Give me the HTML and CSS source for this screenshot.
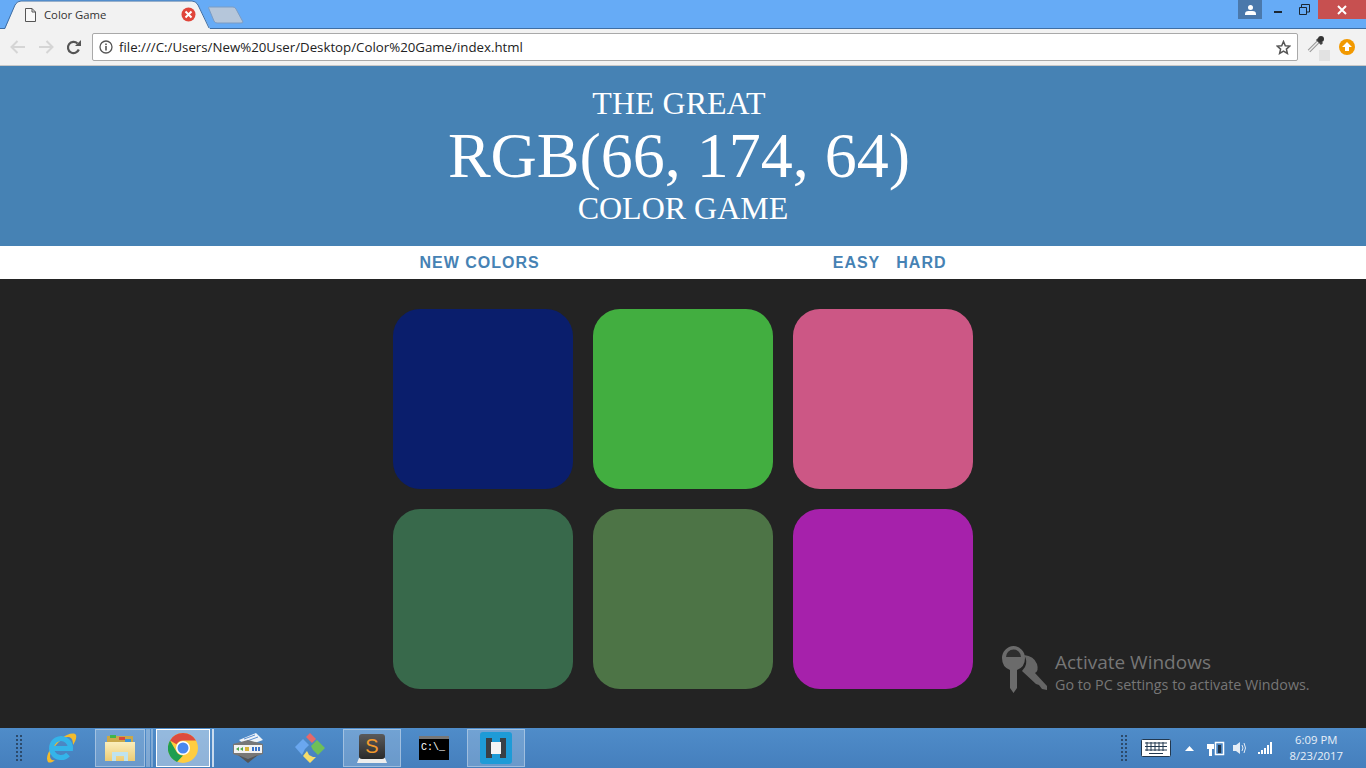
FILE: index.html
```html
<!DOCTYPE html>
<html lang="en">
<head>
<meta charset="utf-8">
<title>Color Game</title>
<link rel="stylesheet" href="styles.css">
</head>
<body>
<div class="window">
  <div class="tabstrip">
    <div class="tab">
      <svg class="tab-shape" width="210" height="29" viewBox="0 0 210 29"><path d="M5 29 L15 5 Q17 1 21 1 L192 1 Q196 1 198 5 L210 29 Z" fill="#f2f2f2"/><path d="M5 28 L15 5 Q17 1 21 1 L192 1 Q196 1 198 5 L209 28" fill="none" stroke="#3f6ea3" stroke-width="1"/></svg>
      <svg class="tab-file" width="11" height="14" viewBox="0 0 11 14"><path d="M.5 .5H7L10.500 4V13.500H.5V.5Z M7 .5V4H10.500" fill="#f8f8f8" stroke="#555"/></svg>
      <span class="tab-title">Color Game</span>
      <svg class="tab-close" width="15" height="15" viewBox="0 0 15 15"><circle cx="7.500" cy="7.500" r="7" fill="#e0453a"/><path d="M4.500 4.500L10.500 10.500M10.500 4.500L4.500 10.500" stroke="#fff" stroke-width="2"/></svg>
    </div>
    <svg class="new-tab" width="36" height="18" viewBox="0 0 36 18"><path d="M1 1H25Q27 1 28 3L35 16Q35 17 33 17H9Q7 17 6 15L1 3Q0 1 1 1Z" fill="#b5c6da" stroke="#7b9cc4"/></svg>
    <div class="win-controls">
      <div class="avatar"><svg width="11" height="10" viewBox="0 0 11 10"><circle cx="5.500" cy="2.500" r="2.500" fill="#fff"/><path d="M0 9Q0 6 3.500 6H7.500Q11 6 11 9V10H0Z" fill="#fff"/></svg></div>
      <div class="ctl ctl-min"><svg width="9" height="9" viewBox="0 0 9 9"><rect x="0" y="6" width="8" height="2" fill="#1b2733"/></svg></div>
      <div class="ctl ctl-restore"><svg width="11" height="11" viewBox="0 0 11 11"><path d="M.5 3.500H7.500V10.500H.5Z" fill="none" stroke="#1b2733"/><path d="M2.500 3V.5H10.500V8H8" fill="none" stroke="#1b2733"/></svg></div>
      <div class="ctl-close"><svg width="12" height="10" viewBox="0 0 12 10"><path d="M2 1L10 9M10 1L2 9" stroke="#fff" stroke-width="2"/></svg></div>
    </div>
  </div>
  <div class="toolbar">
    <svg class="nav-ico" width="16" height="14" viewBox="0 0 16 14"><path d="M15 7H2M7.500 1L1.500 7L7.500 13" fill="none" stroke="#d5d5d5" stroke-width="2"/></svg>
    <svg class="nav-ico" width="16" height="14" viewBox="0 0 16 14"><path d="M1 7H14M8.500 1L14.500 7L8.500 13" fill="none" stroke="#d5d5d5" stroke-width="2"/></svg>
    <svg class="nav-ico reload" width="15" height="15" viewBox="0 0 15 15"><path d="M12.800 9.500A5.600 5.600 0 1 1 11.500 3.500" fill="none" stroke="#555" stroke-width="2.200"/><path d="M9 6H15V0Z" fill="#555"/></svg>
    <div class="omnibox">
      <svg width="14" height="14" viewBox="0 0 14 14"><circle cx="7" cy="7" r="6" fill="none" stroke="#555" stroke-width="1.300"/><rect x="6.200" y="6" width="1.600" height="4.500" fill="#555"/><rect x="6.200" y="3.500" width="1.600" height="1.600" fill="#555"/></svg>
      <span class="url">file:///C:/Users/New%20User/Desktop/Color%20Game/index.html</span>
      <svg class="star" width="15" height="15" viewBox="0 0 15 15"><path d="M7.500 1.500L9.300 5.700L13.800 6.100L10.400 9.100L11.400 13.500L7.500 11.200L3.600 13.500L4.600 9.100L1.200 6.100L5.700 5.700Z" fill="none" stroke="#555" stroke-width="1.500"/></svg>
    </div>
    <div class="ext">
      <svg width="18" height="18" viewBox="0 0 18 18"><path d="M2 16L11 7" stroke="#999" stroke-width="3.500"/><path d="M2 16L11 7" stroke="#eee" stroke-width="1.500"/><path d="M10 4L15 9" stroke="#444" stroke-width="3"/><circle cx="14" cy="4" r="3" fill="#333"/></svg>
      <span class="ext-badge"></span>
    </div>
    <svg class="update" width="16" height="16" viewBox="0 0 16 16"><circle cx="8" cy="8" r="8" fill="#f29900"/><path d="M8 3L13 8H10V12H6V8H3Z" fill="#fff"/></svg>
  </div>

  <header class="hero">
    <h1 class="hero-title">
      <span class="line-small offset">THE GREAT</span>
      <span class="line-big offset">RGB(66, 174, 64)</span>
      <span class="line-small">COLOR GAME</span>
    </h1>
  </header>
  <nav class="stripe">
    <div class="stripe-inner">
      <button class="btn">NEW COLORS</button>
      <div class="modes"><button class="btn">EASY</button><button class="btn">HARD</button></div>
    </div>
  </nav>
  <main class="game">
    <div class="board">
      <div class="square c1"></div>
      <div class="square c2"></div>
      <div class="square c3"></div>
      <div class="square c4"></div>
      <div class="square c5"></div>
      <div class="square c6"></div>
    </div>
    <div class="activate">
      <svg width="48" height="50" viewBox="0 0 48 50"><path d="M24 11Q34 12 37 20Q39 27 35 29L47 42V46L42 45L39 41L36 40L22 27L25 23Q28 17 24 11Z" fill="#666"/><path d="M13.500 2A12 12 0 0 1 25 14Q25 23 17 26V44L13.500 49L10 44V26Q2 23 2 14A12 12 0 0 1 13.500 2Z" fill="#6b6b6b"/><path d="M6 13A7.500 7.500 0 0 1 21 13Z" fill="#2e2e2e"/></svg>
      <div class="activate-text">
        <div class="activate-h">Activate Windows</div>
        <div class="activate-s">Go to PC settings to activate Windows.</div>
      </div>
    </div>
  </main>
  <footer class="taskbar">
    <div class="grip"></div>
    <div class="task t-ie"><svg width="32" height="32" viewBox="0 0 32 32"><path d="M3 30C-1 24 8 12 15 7C22 2 29 0 31 3C32 6 30 10 28 13C28 7 26 5 23 5C16 5 6 18 5 24C5 27 7 29 10 28C7 31 4 31 3 30Z" fill="#f3bb2c"/><path d="M9 16.500H25.500A9.500 9.500 0 1 0 23 22.500" fill="none" stroke="#34b4ea" stroke-width="5"/></svg></div>
    <div class="task t-folder running"><svg width="32" height="28" viewBox="0 0 32 28"><defs><linearGradient id="fold" x1="0" y1="0" x2="0" y2="1"><stop offset="0" stop-color="#fbeebc"/><stop offset="1" stop-color="#eccb74"/></linearGradient></defs><rect x="3" y="2" width="26" height="8" fill="#c9a84a"/><rect x="6" y="1" width="6" height="3" fill="#3fb54a"/><rect x="15" y="3" width="6" height="3" fill="#d9483b"/><rect x="21" y="5" width="6" height="3" fill="#3b94d9"/><path d="M1 8H31V27H1Z" fill="url(#fold)"/><path d="M8 27V18H24V27H20V22H12V27Z" fill="#bfe3ef"/></svg></div>
    <span class="stack stack-a"></span>
    <div class="task t-chrome active"><svg width="30" height="30" viewBox="0 0 30 30"><circle cx="15" cy="15" r="15" fill="#ffcd3f"/><path d="M15 0A15 15 0 0 1 28 7.500H15A7.500 7.500 0 0 0 8.500 11.300L2 7.500A15 15 0 0 1 15 0Z" fill="#dd4b3e"/><path d="M2 7.500L8.500 18.700A7.500 7.500 0 0 0 15 22.500L9 29A15 15 0 0 1 2 7.500Z" fill="#1e9e50"/><circle cx="15" cy="15" r="7" fill="#fff"/><circle cx="15" cy="15" r="5.500" fill="#4a88ee"/></svg></div>
    <span class="stack stack-b"></span>
    <div class="task t-xml"><svg width="32" height="32" viewBox="0 0 32 32"><path d="M7 8L24 1L31 8L14 14Z" fill="#eef3f8"/><path d="M12 7L23 3M15 9L26 5" stroke="#5b8fd0"/><path d="M1 12L16 8L31 12V22L16 27L1 22Z" fill="#777"/><rect x="2" y="13" width="28" height="8" fill="#f2f2f2"/><path d="M4 17L7 15V19ZM8 17L11 15V19Z" fill="#4fa84a"/><rect x="13" y="15" width="4" height="4" fill="#d9b63b"/><rect x="20" y="15" width="2" height="4" fill="#3b74c9"/><rect x="23" y="15" width="2" height="4" fill="#3b74c9"/><rect x="26" y="15" width="2" height="4" fill="#3b74c9"/><path d="M6 23L16 31L26 23L16 27Z" fill="#555"/></svg></div>
    <div class="task t-git"><svg width="32" height="32" viewBox="0 0 32 32"><path d="M16 1L22 7L18 11L13 6L12 5Z" fill="#e6696a"/><path d="M1 15L9 7L15 13L11 17L8 23Z" fill="#6aa7ef"/><path d="M31 16L23 8L17 14L19 18L24 23Z" fill="#6fbf57"/><path d="M16 31L9 24L13 19L15 23L19 25L22 25Z" fill="#f5dc6a"/></svg></div>
    <div class="task t-subl running"><svg width="32" height="32" viewBox="0 0 32 32"><defs><linearGradient id="subl" x1="0" y1="0" x2="0" y2="1"><stop offset="0" stop-color="#5a5a5a"/><stop offset="1" stop-color="#2a2a2a"/></linearGradient></defs><path d="M3 26L1 31H31L29 26Z" fill="#eee"/><rect x="3" y="2" width="26" height="25" rx="3" fill="url(#subl)"/><text x="16" y="21" class="subl-s">S</text></svg></div>
    <div class="task t-cmd"><span class="cmd-box">C:\_</span></div>
    <div class="task t-brackets running"><svg width="32" height="32" viewBox="0 0 32 32"><rect width="32" height="32" rx="3" fill="#1e9bd7"/><rect x="6" y="6" width="20" height="20" fill="#3a4046"/><rect x="12" y="6" width="8" height="4" fill="#1e9bd7"/><rect x="12" y="22" width="8" height="4" fill="#1e9bd7"/><rect x="11" y="10" width="10" height="12" fill="#f4f4f4"/></svg></div>
    <div class="tray">
      <div class="grip grip-tray"></div>
      <svg width="30" height="18" viewBox="0 0 30 18"><rect x=".5" y=".5" width="29" height="17" rx="1" fill="#fff" stroke="#22384f"/><path d="M4 4H26M4 7.500H26M4 11H26M8 14.500H22M6 3V12M10 3V12M14 3V12M18 3V12M22 3V12" stroke="#22384f"/></svg>
      <svg class="tray-up" width="9" height="5" viewBox="0 0 9 5"><path d="M4.500 0L9 5H0Z" fill="#fff"/></svg>
      <svg class="tray-plug" width="18" height="16" viewBox="0 0 18 16"><path d="M2 0V4M5 0V4M0 4H7V9H5V16H2V9H0Z" fill="#fff"/><rect x="8.500" y="2.500" width="8" height="12" fill="none" stroke="#fff" stroke-width="1.500"/><rect x="11" y="5" width="3" height="8" fill="#22384f"/></svg>
      <svg width="16" height="14" viewBox="0 0 16 14"><path d="M0 4H3L7 1V13L3 10H0Z" fill="#e4ecf5"/><path d="M9 4Q11 7 9 10M11 2Q14 7 11 12" fill="none" stroke="#e4ecf5"/></svg>
      <svg width="16" height="12" viewBox="0 0 16 12"><path d="M1 10h2v2H1zM4 8h2v4H4zM7 6h2v6H7zM10 3h2v9h-2zM13 0h2v12h-2z" fill="#fff"/></svg>
      <div class="clock"><div>6:09 PM</div><div>8/23/2017</div></div>
    </div>
  </footer>
</div>
</body>
</html>
```
FILE: styles.css
```css
* { box-sizing: border-box; }
html, body { margin: 0; padding: 0; height: 768px; overflow: hidden; }
.window { width: 1366px; height: 768px; display: flex; flex-direction: column; background: #232323; font-family: "Open Sans", sans-serif; }

.tabstrip { height: 29px; background: #66abf6; border-bottom: 1px solid #3f6ea3; display: flex; align-items: flex-start; position: relative; flex: none; }
.tab { width: 210px; height: 29px; position: relative; display: flex; align-items: center; padding-left: 25px; flex: none; }
.tab-shape { position: absolute; left: 0; top: 0; }
.tab-file, .tab-title, .tab-close { position: relative; }
.tab-file { flex: none; }
.tab-title { margin-left: 8px; font-size: 11.3px; color: #333; width: 138px; }
.tab-close { flex: none; margin-left: -1px; }
.new-tab { margin-top: 6px; margin-left: -2px; flex: none; }
.win-controls { margin-left: auto; display: flex; align-items: flex-start; height: 19px; }
.avatar { width: 24px; height: 19px; background: #4a78ab; display: flex; align-items: center; justify-content: center; margin-right: 3px; }
.ctl { width: 26px; height: 19px; display: flex; align-items: center; justify-content: center; }
.ctl-close { width: 48px; height: 19px; background: #c75050; display: flex; align-items: center; justify-content: center; margin-left: 1px; }

.toolbar { height: 37px; background: #f2f2f2; display: flex; align-items: center; padding: 0 10px; flex: none; border-bottom: 1px solid #c8c8c8; }
.nav-ico { margin-right: 12px; flex: none; }
.reload { margin-right: 11px; }
.omnibox { width: 1206px; height: 28px; background: #fff; border: 1px solid #a9a9a9; border-radius: 2px; display: flex; align-items: center; padding: 0 6px 0 6px; flex: none; }
.url { margin-left: 6px; font-size: 13.27px; color: #222; }
.star { margin-left: auto; }
.ext { width: 22px; height: 24px; margin-left: 9px; position: relative; flex: none; }
.ext-badge { position: absolute; right: -1px; bottom: -2px; width: 11px; height: 11px; background: #e2e2e2; }
.update { margin-left: 10px; flex: none; }

.hero { height: 180px; background: steelblue; color: #fff; flex: none; }
.hero-title { margin: 0; padding-top: 20px; font-family: "Liberation Serif", serif; font-weight: 400; text-align: center; }
.hero-title span { display: block; }
.line-small { font-size: 32px; line-height: 35px; }
.line-big { font-size: 64px; line-height: 70px; }
.offset { padding-right: 8px; }

.stripe { height: 33px; background: #fff; flex: none; }
.stripe-inner { width: 600px; margin: 0 auto; height: 33px; display: flex; align-items: center; justify-content: space-between; padding: 0 20px; }
.btn { background: none; border: 0; padding: 0; color: steelblue; font: 700 16px "Liberation Sans", sans-serif; letter-spacing: 1px; }
.btn:first-child { margin-left: 16.500px; }
.modes { display: flex; gap: 16px; margin-right: 16.500px; }
.modes .btn:first-child { margin-left: 0; }

.game { flex: 1; position: relative; }
.board { width: 600px; margin: 0 auto; padding-top: 30px; display: grid; grid-template-columns: repeat(3, 180px); gap: 20px; justify-content: center; }
.square { height: 180px; border-radius: 27px; }
.c1 { background: #0a1e6c; }
.c2 { background: #42ae40; }
.c3 { background: #cc5785; }
.c4 { background: #38694b; }
.c5 { background: #4d7446; }
.c6 { background: #a621ab; }

.activate { position: absolute; left: 1000px; top: 365px; display: flex; align-items: flex-start; color: #767676; }
.activate-text { margin-left: 7px; margin-top: 6px; }
.activate-h { font-size: 19px; line-height: 24px; }
.activate-s { font-size: 14.3px; line-height: 21px; }

.taskbar { height: 40px; background: linear-gradient(#4f8cc9, #457fbd); display: flex; align-items: center; flex: none; padding-left: 15px; }
.grip { width: 8px; height: 28px; margin-right: 20px; flex: none; background-image: radial-gradient(circle, #2c4a6b 1px, transparent 1.2px); background-size: 4px 4px; }
.task { height: 38px; display: flex; align-items: center; justify-content: center; flex: none; }
.running { background: rgba(255,255,255,.2); border: 1px solid rgba(255,255,255,.35); }
.active { background: rgba(255,255,255,.4); border: 1px solid #fff; }
.t-ie { width: 52px; justify-content: flex-start; padding-left: 2px; }
.t-folder { width: 50px; }
.stack { height: 38px; flex: none; }
.stack-a { width: 11px; background: linear-gradient(90deg, transparent 1px, rgba(255,255,255,.3) 1px, rgba(255,255,255,.3) 5px, transparent 5px, transparent 6px, rgba(255,255,255,.3) 6px, rgba(255,255,255,.3) 8px, transparent 8px); }
.stack-b { width: 5px; background: linear-gradient(90deg, transparent 2px, rgba(255,255,255,.7) 2px, rgba(255,255,255,.7) 4px, transparent 4px); }
.t-chrome { width: 54px; }
.t-xml { width: 65px; }
.t-git { width: 60px; }
.t-subl { width: 58px; margin-left: 3px; }
.subl-s { font: 400 20px "Liberation Sans", sans-serif; fill: #f39a2d; text-anchor: middle; }
.t-cmd { width: 66px; }
.cmd-box { width: 30px; height: 24px; background: #000; border-top: 3px solid #777; color: #fff; font: 10px/18px "Liberation Mono", monospace; padding-left: 2px; }
.t-brackets { width: 58px; }
.tray { margin-left: auto; display: flex; align-items: center; gap: 8px; padding-right: 23px; }
.grip-tray { margin-right: 5px; }
.tray-up { margin: 0 5px 0 6px; }
.clock { color: #e8eff7; font-size: 11.300px; line-height: 16px; text-align: center; margin-left: 8px; }
```
